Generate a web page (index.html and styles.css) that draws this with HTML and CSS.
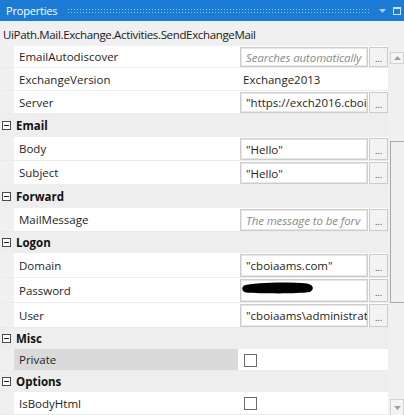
FILE: index.html
```html
<!DOCTYPE html>
<html>
<head>
<meta charset="utf-8">
<link rel="stylesheet" href="styles.css">
</head>
<body>
<div class="panel">
  <div class="titlebar">
    <span class="title">Properties</span>
    <span class="grip"></span>
    <svg class="tb-arrow" width="7" height="4" viewBox="0 0 7 4"><path d="M0 0H7L3.5 4Z" fill="#a9cdf0"/></svg>
    <svg class="tb-max" width="8" height="8" viewBox="0 0 8 8"><rect x="0.5" y="0.5" width="7" height="7" fill="none" stroke="#cfe3f7"/><rect x="0" y="0" width="8" height="2" fill="#cfe3f7"/></svg>
  </div>
  <div class="typename">UiPath.Mail.Exchange.Activities.SendExchangeMail</div>
  <div class="body">
    <div class="grid">
      <div class="prop h22"><div class="name">EmailAutodiscover</div><div class="value"><div class="tb ph">Searches automatically</div><div class="dots">...</div></div></div>
      <div class="prop h23"><div class="name">ExchangeVersion</div><div class="value"><div class="plain">Exchange2013</div></div></div>
      <div class="prop h23"><div class="name">Server</div><div class="value"><div class="tb">"https://exch2016.cboi</div><div class="dots">...</div></div></div>
      <div class="cat h23"><span class="toggle"></span>Email</div>
      <div class="prop h24"><div class="name">Body</div><div class="value"><div class="tb">"Hello"</div><div class="dots">...</div></div></div>
      <div class="prop h24"><div class="name">Subject</div><div class="value"><div class="tb">"Hello"</div><div class="dots">...</div></div></div>
      <div class="cat h23"><span class="toggle"></span>Forward</div>
      <div class="prop h24"><div class="name">MailMessage</div><div class="value"><div class="tb ph">The message to be forv</div><div class="dots">...</div></div></div>
      <div class="cat h21"><span class="toggle"></span>Logon</div>
      <div class="prop h25"><div class="name">Domain</div><div class="value"><div class="tb">"cboiaams.com"</div><div class="dots">...</div></div></div>
      <div class="prop h25"><div class="name">Password</div><div class="value"><div class="tb pw"><svg class="blob" width="74" height="12" viewBox="0 0 74 12"><path d="M3 3.5C12 0.5 48 -0.5 66 1.5C72 2.5 74 7 69 10C56 12 20 11.5 5 10.5C1 10 0 6 3 3.5Z" fill="#000"/></svg></div><div class="dots">...</div></div></div>
      <div class="prop h25"><div class="name">User</div><div class="value"><div class="tb">"cboiaams\administrat</div><div class="dots">...</div></div></div>
      <div class="cat h21"><span class="toggle"></span>Misc</div>
      <div class="prop h22 selected"><div class="name">Private</div><div class="value"><span class="chk"></span></div></div>
      <div class="cat h21"><span class="toggle"></span>Options</div>
      <div class="prop h23"><div class="name">IsBodyHtml</div><div class="value"><span class="chk"></span></div></div>
    </div>
    <div class="scrollbar">
      <div class="sb-btn up"><svg width="7" height="4" viewBox="0 0 7 4"><path d="M0 4H7L3.5 0Z" fill="#a0a0a0"/></svg></div>
      <div class="track"><div class="thumb"></div></div>
      <div class="sb-btn down"><svg width="7" height="4" viewBox="0 0 7 4"><path d="M0 0H7L3.5 4Z" fill="#a0a0a0"/></svg></div>
    </div>
  </div>
</div>
</body>
</html>
```
FILE: styles.css
```css
html, body {
  margin: 0;
  padding: 0;
  width: 404px;
  height: 415px;
  overflow: hidden;
  background: #f0f0f0;
}
body {
  font-family: "Open Sans", "Noto Sans", sans-serif;
  font-size: 11.5px;
  color: #1e1e1e;
}
.panel {
  width: 404px;
  height: 415px;
  display: flex;
  flex-direction: column;
}
.titlebar {
  height: 21px;
  flex: none;
  background: #1c7bd4;
  display: flex;
  align-items: center;
  padding: 0 2px 0 6px;
  color: #fff;
}
.title {
  font-size: 11px;
  letter-spacing: -0.2px;
  line-height: 21px;
}
.grip {
  flex: 1;
  height: 5px;
  margin: 0 8px 0 10px;
  background-image: radial-gradient(circle, rgba(190,220,250,0.75) 0.7px, transparent 0.9px);
  background-size: 3px 3px;
}
.tb-arrow {
  margin-right: 7px;
  margin-top: 1px;
}
.tb-max {
  margin-right: 1px;
}
.typename {
  height: 25px;
  flex: none;
  padding-left: 3px;
  padding-top: 2px;
  box-sizing: border-box;
  display: flex;
  align-items: center;
  font-size: 11.5px;
  letter-spacing: -0.35px;
  color: #1a1a1a;
  white-space: nowrap;
}
.body {
  flex: 1;
  display: flex;
  overflow: hidden;
}
.grid {
  width: 388px;
  flex: none;
  display: flex;
  flex-direction: column;
  overflow: hidden;
}
.h21 { height: 21px; }
.h22 { height: 22px; }
.h23 { height: 23px; }
.h24 { height: 24px; }
.h25 { height: 25px; }
.prop, .cat {
  flex: none;
  box-sizing: border-box;
  display: flex;
}
.prop {
  padding-left: 14px;
  border-bottom: 1px solid #ebebeb;
  background: #f0f0f0;
}
.name {
  width: 224px;
  flex: none;
  background: #fff;
  padding-left: 5px;
  box-sizing: border-box;
  display: flex;
  align-items: center;
  white-space: nowrap;
}
.selected .name {
  background: #dadada;
}
.value {
  flex: 1;
  background: #fff;
  display: flex;
  align-items: stretch;
  padding: 1px 0 0 2px;
  min-width: 0;
}
.plain {
  display: flex;
  align-items: center;
  padding-left: 3px;
}
.tb {
  width: 128px;
  flex: none;
  box-sizing: border-box;
  border: 1px solid #cdcdcd;
  box-shadow: inset 0 0 0 1px #e6e6e6;
  padding-left: 5px;
  display: flex;
  align-items: center;
  white-space: nowrap;
  overflow: hidden;
  background: #fff;
}
.tb.ph {
  font-style: italic;
  color: #8a8a8a;
  letter-spacing: -0.1px;
}
.tb.pw {
  padding-left: 0;
  align-items: flex-start;
}
.blob {
  margin-top: 2px;
  flex: none;
}
.dots {
  width: 19px;
  flex: none;
  margin-left: 1px;
  box-sizing: border-box;
  border: 1px solid #cbcbcb;
  background: #f3f3f3;
  color: #3c3c3c;
  font-size: 9px;
  line-height: 1;
  display: flex;
  align-items: center;
  justify-content: center;
  padding-top: 3px;
}
.chk {
  width: 13px;
  height: 13px;
  box-sizing: border-box;
  border: 1px solid #6a6a6a;
  background: #fff;
  margin: 4px 0 0 4px;
}
.cat {
  background: #eeeeee;
  align-items: center;
  font-weight: bold;
  color: #111;
  font-size: 11.5px;
}
.toggle {
  width: 9px;
  height: 9px;
  box-sizing: border-box;
  border: 1px solid #4a4a4a;
  margin: 0 5px 0 2px;
  display: flex;
  align-items: center;
  justify-content: center;
  background: #fff;
}
.toggle::before {
  content: "";
  width: 5px;
  height: 1px;
  background: #222;
}
.scrollbar {
  width: 14px;
  flex: none;
  margin-left: 2px;
  display: flex;
  flex-direction: column;
  padding-top: 6px;
  box-sizing: border-box;
}
.sb-btn {
  flex: none;
  box-sizing: border-box;
  border: 1px solid #d2d2d2;
  background: #f4f4f4;
  display: flex;
  align-items: center;
  justify-content: center;
}
.sb-btn.up {
  height: 12px;
}
.sb-btn.down {
  height: 16px;
  border-bottom: none;
}
.track {
  flex: 1;
}
.thumb {
  margin-top: 77px;
  height: 162px;
  box-sizing: border-box;
  border: 1px solid #a9a9a9;
  border-right: none;
  background: #f0f0f0;
}
```
